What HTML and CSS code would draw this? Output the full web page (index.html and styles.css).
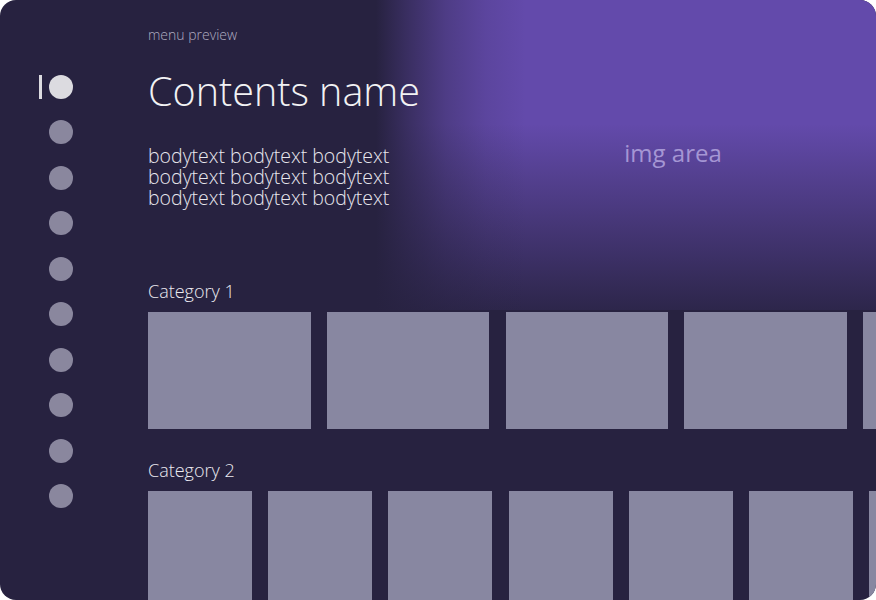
FILE: index.html
```html
<!DOCTYPE html>
<html lang="en">
<head>
<meta charset="utf-8">
<title>menu preview</title>
<link rel="stylesheet" href="styles.css">
</head>
<body>
<div class="frame">
  <div class="hero"><span class="hero-label">img area</span></div>
  <nav class="rail">
    <div class="rail-item active"><span class="bar"></span><span class="dot"></span></div>
    <div class="rail-item"><span class="bar"></span><span class="dot"></span></div>
    <div class="rail-item"><span class="bar"></span><span class="dot"></span></div>
    <div class="rail-item"><span class="bar"></span><span class="dot"></span></div>
    <div class="rail-item"><span class="bar"></span><span class="dot"></span></div>
    <div class="rail-item"><span class="bar"></span><span class="dot"></span></div>
    <div class="rail-item"><span class="bar"></span><span class="dot"></span></div>
    <div class="rail-item"><span class="bar"></span><span class="dot"></span></div>
    <div class="rail-item"><span class="bar"></span><span class="dot"></span></div>
    <div class="rail-item"><span class="bar"></span><span class="dot"></span></div>
  </nav>
  <main class="content">
    <p class="crumb">menu preview</p>
    <h1 class="title">Contents name</h1>
    <p class="body">bodytext bodytext bodytext<br>bodytext bodytext bodytext<br>bodytext bodytext bodytext</p>
    <section class="cat cat-1">
      <h2 class="cat-title">Category 1</h2>
      <div class="row row-wide">
        <div class="card"></div><div class="card"></div><div class="card"></div><div class="card"></div><div class="card"></div>
      </div>
    </section>
    <section class="cat cat-2">
      <h2 class="cat-title">Category 2</h2>
      <div class="row row-narrow">
        <div class="card"></div><div class="card"></div><div class="card"></div><div class="card"></div><div class="card"></div><div class="card"></div><div class="card"></div>
      </div>
    </section>
  </main>
</div>
</body>
</html>
```
FILE: styles.css
```css
html, body {
  margin: 0;
  padding: 0;
  background: #ffffff;
}

.frame {
  position: relative;
  width: 876px;
  height: 600px;
  border-radius: 16px;
  overflow: hidden;
  background: #272240;
  display: grid;
  grid-template-columns: 148px 1fr;
  font-family: "Open Sans", "Noto Sans", sans-serif;
}

.hero {
  position: absolute;
  top: 0;
  right: 0;
  width: 500px;
  height: 310px;
  box-sizing: border-box;
  padding-left: 94px;
  padding-bottom: 6px;
  display: flex;
  align-items: center;
  justify-content: center;
  background:
    linear-gradient(to right, #272240 0px, rgba(39,34,64,0.7) 30px, rgba(39,34,64,0.35) 70px, rgba(39,34,64,0.12) 110px, rgba(39,34,64,0) 150px),
    linear-gradient(to bottom, rgba(39,34,64,0) 40%, rgba(39,34,64,0.45) 70%, rgba(39,34,64,0.9) 100%),
    #634aab;
}

.hero-label {
  font-size: 24px;
  color: #a596d4;
}

.rail {
  position: relative;
  z-index: 1;
  display: flex;
  flex-direction: column;
  gap: 21.5px;
  padding-top: 74.5px;
  padding-left: 39px;
}

.rail-item {
  display: flex;
  align-items: center;
  gap: 7px;
}

.bar {
  width: 3px;
  height: 24px;
  background: transparent;
}

.dot {
  width: 24px;
  height: 24px;
  border-radius: 50%;
  background: #8a879e;
}

.rail-item.active .bar,
.rail-item.active .dot {
  background: #dcdbe0;
}

.content {
  position: relative;
  z-index: 1;
  min-width: 0;
  overflow: hidden;
  padding-top: 27px;
}

.crumb {
  margin: 0;
  font-size: 14px;
  line-height: 16px;
  font-weight: 300;
  color: #b0adc0;
}

.title {
  margin: 24px 0 0;
  font-size: 39.5px;
  line-height: 48px;
  font-weight: 300;
  color: #f2f2f4;
}

.body {
  margin: 30px 0 0;
  font-size: 19.5px;
  line-height: 21px;
  font-weight: 300;
  color: #e8e7ee;
}

.cat-title {
  margin: 0;
  font-size: 18px;
  line-height: 20px;
  font-weight: 300;
  color: #ebeaf0;
}

.cat-1 {
  margin-top: 73px;
}

.cat-2 {
  margin-top: 31.4px;
}

.row {
  display: flex;
  margin-top: 11px;
}

.card {
  flex-shrink: 0;
  background: #8887a1;
}

.row-wide {
  gap: 16.25px;
}

.row-wide .card {
  width: 162.5px;
  height: 116.7px;
}

.row-narrow {
  gap: 16.2px;
}

.row-narrow .card {
  width: 104px;
  height: 120px;
}
```
